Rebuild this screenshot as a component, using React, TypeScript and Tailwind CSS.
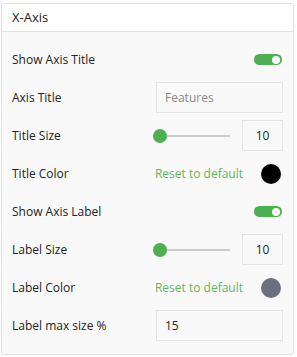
import React from 'react';

const font = { fontFamily: '"Open Sans", "Noto Sans", sans-serif' };

function Toggle() {
  return (
    <div className="mr-[1px] flex h-[11px] w-[28px] items-center justify-end rounded-full bg-[#4caf50] pr-[2px]">
      <div className="h-[8px] w-[8px] rounded-full bg-white" />
    </div>
  );
}

function Slider() {
  return (
    <div className="relative flex h-[14px] w-[77px] items-center">
      <div className="ml-[7px] h-[2px] w-[70px] bg-[#cccccc]" />
      <div className="absolute left-0 top-0 h-[14px] w-[14px] rounded-full bg-[#4caf50]" />
    </div>
  );
}

function NumBox({ value }: { value: string }) {
  return (
    <div className="flex h-[31px] w-[41px] items-center justify-center border border-[#e3e3e3] bg-[#f9f9f9] text-[12px] text-[#222]">
      {value}
    </div>
  );
}

function TextBox({ value, muted }: { value: string; muted?: boolean }) {
  return (
    <div
      className={
        'flex h-[31px] w-[127px] items-center border border-[#e3e3e3] bg-[#f9f9f9] px-[8px] text-[12px] ' +
        (muted ? 'text-[#8a8a8a]' : 'text-[#222]')
      }
    >
      {value}
    </div>
  );
}

function Row({ label, children }: { label: string; children: React.ReactNode }) {
  return (
    <div className="flex h-[31px] items-center justify-between">
      <span className="text-[12px] text-[#222]">{label}</span>
      {children}
    </div>
  );
}

function SizeControl({ value }: { value: string }) {
  return (
    <div className="flex items-center gap-[12px]">
      <Slider />
      <NumBox value={value} />
    </div>
  );
}

function ColorControl({ color }: { color: string }) {
  return (
    <div className="mr-[2px] flex items-center gap-[18px]">
      <span className="text-[12px] text-[#5cb85c]">Reset to default</span>
      <div className="h-[20px] w-[20px] rounded-full" style={{ backgroundColor: color }} />
    </div>
  );
}

export default function App() {
  return (
    <div className="min-h-[357px] bg-white pl-[1px] pt-[3px]" style={font}>
      <div className="w-[293px] overflow-hidden rounded-[3px] border border-[#e0e0e0] bg-[#f9f9f9]">
        <div className="flex h-[28px] items-center border-b border-[#e0e0e0] bg-white px-[10px] text-[13px] text-[#222]">
          X-Axis
        </div>
        <div className="flex flex-col gap-[7px] pb-[13px] pl-[10px] pr-[10px] pt-[12px]">
          <Row label="Show Axis Title">
            <Toggle />
          </Row>
          <Row label="Axis Title">
            <TextBox value="Features" muted />
          </Row>
          <Row label="Title Size">
            <SizeControl value="10" />
          </Row>
          <Row label="Title Color">
            <ColorControl color="#000000" />
          </Row>
          <Row label="Show Axis Label">
            <Toggle />
          </Row>
          <Row label="Label Size">
            <SizeControl value="10" />
          </Row>
          <Row label="Label Color">
            <ColorControl color="#6b717e" />
          </Row>
          <Row label="Label max size %">
            <TextBox value="15" />
          </Row>
        </div>
      </div>
    </div>
  );
}
